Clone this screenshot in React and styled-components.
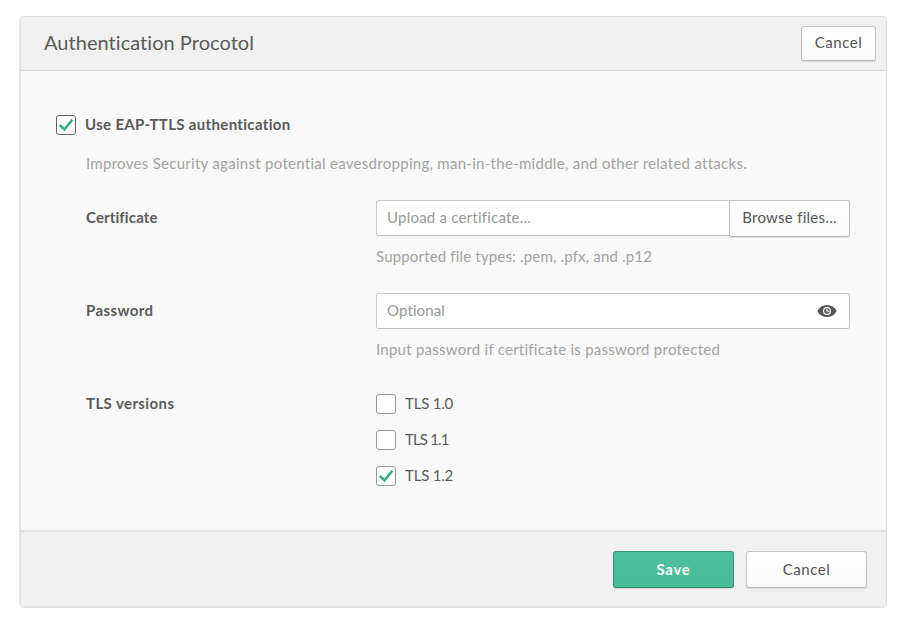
import React, { useState } from "react";
import styled, { createGlobalStyle } from "styled-components";

const GlobalStyle = createGlobalStyle`
  *, *::before, *::after { box-sizing: border-box; }
  body {
    margin: 0;
    background: #fff;
    color: #5a5a5a;
    font-family: Lato, "Open Sans", sans-serif;
    font-size: 15px;
    line-height: 20px;
  }
  button, input { font: inherit; color: inherit; margin: 0; }
`;

const Page = styled.main`
  padding: 16px 13px 13px 19px;
`;

const Panel = styled.form`
  display: flex;
  flex-direction: column;
  height: 592px;
  border: 1px solid #dcdcdc;
  border-left: 2px solid #e5e5e5;
  border-bottom: 2px solid #e2e2e2;
  border-radius: 5px;
  background: #f9f9f9;
`;

const Header = styled.header`
  display: flex;
  align-items: flex-start;
  justify-content: space-between;
  height: 54px;
  padding: 9px 10px 0 23px;
  border-bottom: 1px solid #dadada;
  border-radius: 4px 4px 0 0;
  background: #f1f1f1;
`;

const Title = styled.h1`
  margin: 3px 0 0;
  font-size: 20px;
  font-weight: 400;
  line-height: 26px;
  letter-spacing: 0.04px;
`;

const Text = styled.span`
  letter-spacing: ${(p) => p.$spacing || 0}px;
`;

const Button = styled.button`
  display: inline-flex;
  align-items: center;
  justify-content: center;
  flex: none;
  width: ${(p) => (p.$compact ? 75 : 121)}px;
  height: ${(p) => (p.$compact ? 35 : 37)}px;
  padding: 0 0 ${(p) => (p.$raised ? 3 : 1)}px;
  border: 1px solid ${(p) => (p.$primary ? "#359a79" : "#c5c5c5")};
  border-bottom-color: ${(p) => (p.$primary ? "#2f8b6d" : "#b9b9b9")};
  border-radius: 3px;
  background: ${(p) =>
    p.$primary
      ? "linear-gradient(#4dc19d, #45bb96)"
      : "linear-gradient(#fff, #fafafa)"};
  box-shadow: 0 1px 1px rgba(0, 0, 0, 0.1);
  color: ${(p) => (p.$primary ? "#fff" : "#555")};
  font-weight: ${(p) => (p.$primary ? 700 : 400)};
`;

const Body = styled.section`
  flex: 1;
  padding: 44px 36px 0 35px;
`;

const CheckLabel = styled.label`
  display: flex;
  align-items: center;
  gap: 9px;
  height: 20px;
  font-weight: ${(p) => (p.$strong ? 700 : 400)};
`;

const CheckText = styled(Text)`
  padding-bottom: 2px;
`;

const Box = styled.span`
  display: flex;
  align-items: center;
  justify-content: center;
  flex: none;
  width: 20px;
  height: 20px;
  border: 1px solid ${(p) => (p.$dark ? "#666" : "#969696")};
  border-radius: 3px;
  background: #fff;
`;

const HiddenCheckbox = styled.input`
  position: absolute;
  opacity: 0;
  width: 0;
  height: 0;
`;

const Settings = styled.div`
  padding-left: 30px;
`;

const Hint = styled.p`
  margin: 0;
  color: #a2a2a2;
`;

const Intro = styled(Hint)`
  margin: 18px 0 27px;
`;

const Field = styled.div`
  display: grid;
  grid-template-columns: 290px 1fr;
  min-height: 93px;
`;

const FieldName = styled.div`
  padding-top: 7px;
  font-weight: 700;
`;

const InputGroup = styled.div`
  display: flex;
  align-items: flex-start;
  height: 37px;
  margin-bottom: 9px;
`;

const InputShell = styled.div`
  display: flex;
  align-items: center;
  flex: 1;
  min-width: 0;
  height: 36px;
  padding: 0 12px 0 10px;
  border: 1px solid #c8c8c8;
  border-bottom-color: #bebebe;
  border-radius: 3px;
  background: #fff;
  ${(p) => p.$joined && "margin-right: -3px; border-right: 0;"}
`;

const Input = styled.input`
  flex: 1;
  min-width: 0;
  padding: 0 0 2px;
  border: 0;
  outline: 0;
  background: transparent;
  letter-spacing: ${(p) => p.$spacing}px;
  &::placeholder { color: #999; opacity: 1; }
`;

const Versions = styled.div`
  display: flex;
  flex-direction: column;
  gap: 16px;
  padding-top: 8px;
`;

const Footer = styled.footer`
  display: flex;
  justify-content: flex-end;
  gap: 12px;
  height: 76px;
  padding: 19px 19px 0;
  border-top: 2px solid #e1e1e1;
  border-radius: 0 0 4px 4px;
  background: #f1f1f1;
`;

function CheckIcon() {
  return (
    <svg width="18" height="18" viewBox="0 0 18 18" fill="none" aria-hidden="true">
      <path d="M2.700 9 7.500 13.500 15.300 3.800" stroke="#32ae86" strokeWidth="2.500" />
    </svg>
  );
}

function EyeIcon() {
  return (
    <svg width="20" height="14" viewBox="0 0 20 14" aria-hidden="true">
      <path d="M.3 7C2.400 3 6 .9 10 .9S17.600 3 19.700 7C17.600 11 14 13.100 10 13.100S2.400 11 .3 7Z" fill="#555" />
      <circle cx="10" cy="7" r="3.400" fill="none" stroke="#fff" strokeWidth="1.200" />
      <path d="M10 5V7.300h2.300" fill="none" stroke="#fff" strokeWidth="1.100" />
    </svg>
  );
}

function Checkbox({ label, spacing, initial = false, strong }) {
  const [checked, setChecked] = useState(initial);
  return (
    <CheckLabel $strong={strong}>
      <HiddenCheckbox
        type="checkbox"
        checked={checked}
        onChange={(e) => setChecked(e.target.checked)}
      />
      <Box $dark={strong}>{checked && <CheckIcon />}</Box>
      <CheckText $spacing={spacing}>{label}</CheckText>
    </CheckLabel>
  );
}

export default function App() {
  return (
    <>
      <GlobalStyle />
      <Page>
        <Panel onSubmit={(e) => e.preventDefault()}>
          <Header>
            <Title>Authentication Procotol</Title>
            <Button type="button" $compact $raised>
              <Text $spacing={0.53}>Cancel</Text>
            </Button>
          </Header>
          <Body>
            <Checkbox label="Use EAP-TTLS authentication" spacing={0.33} initial strong />
            <Settings>
              <Intro>
                <Text $spacing={0.285}>
                  Improves Security against potential eavesdropping, man-in-the-middle, and other related attacks.
                </Text>
              </Intro>
              <Field>
                <FieldName><Text $spacing={0.12}>Certificate</Text></FieldName>
                <div>
                  <InputGroup>
                    <InputShell $joined>
                      <Input placeholder="Upload a certificate..." $spacing={0.22} />
                    </InputShell>
                    <Button type="button" $raised><Text $spacing={0.27}>Browse files...</Text></Button>
                  </InputGroup>
                  <Hint><Text $spacing={0.17}>Supported file types: .pem, .pfx, and .p12</Text></Hint>
                </div>
              </Field>
              <Field>
                <FieldName><Text $spacing={0.4}>Password</Text></FieldName>
                <div>
                  <InputGroup>
                    <InputShell>
                      <Input placeholder="Optional" $spacing={0.12} />
                      <EyeIcon />
                    </InputShell>
                  </InputGroup>
                  <Hint><Text $spacing={0.245}>Input password if certificate is password protected</Text></Hint>
                </div>
              </Field>
              <Field>
                <FieldName><Text $spacing={0.4}>TLS versions</Text></FieldName>
                <Versions>
                  <Checkbox label="TLS 1.0" spacing={-0.21} />
                  <Checkbox label="TLS 1.1" spacing={-0.85} />
                  <Checkbox label="TLS 1.2" spacing={-0.21} initial />
                </Versions>
              </Field>
            </Settings>
          </Body>
          <Footer>
            <Button type="submit" $primary><Text $spacing={0.7}>Save</Text></Button>
            <Button type="button"><Text $spacing={0.53}>Cancel</Text></Button>
          </Footer>
        </Panel>
      </Page>
    </>
  );
}
